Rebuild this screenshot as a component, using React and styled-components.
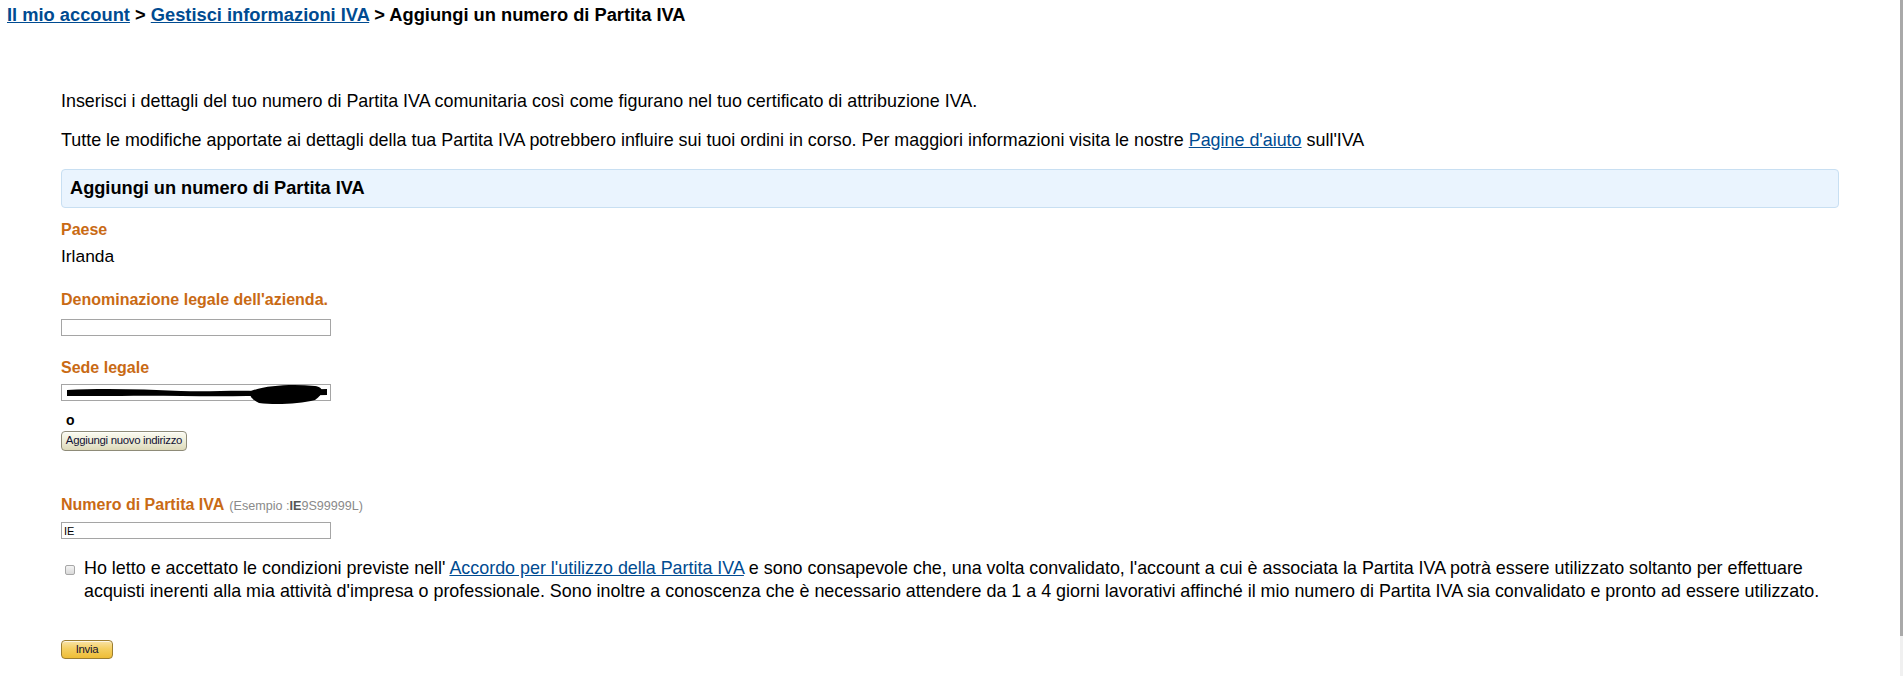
import React from 'react'
import styled, { createGlobalStyle } from 'styled-components'

const GlobalStyle = createGlobalStyle`
  html, body {
    margin: 0;
    padding: 0;
    background: #ffffff;
  }

  body {
    font-family: 'Liberation Sans', Arial, sans-serif;
    color: #000000;
  }
`

const Page = styled.div`
  display: flex;
  min-height: 676px;
`

const Main = styled.div`
  flex: 1;
`

const ScrollEdge = styled.div`
  width: 3px;
  height: 676px;
  background: linear-gradient(to bottom, #a9a9a9 0, #a9a9a9 636px, #f0f0f0 636px);
`

const Breadcrumb = styled.div`
  margin: 4px 0 0 7px;
  font-size: 18.3px;
  font-weight: bold;
  line-height: 21px;
`

const Link = styled.a`
  color: #004b91;
  text-decoration: underline;
`

const Content = styled.div`
  padding: 0 61px;
`

const Intro = styled.p`
  margin: ${(p) => p.$top || 0}px 0 0;
  font-size: 17.9px;
  line-height: 20px;
`

const SectionHeader = styled.div`
  margin-top: 19px;
  height: 37px;
  display: flex;
  align-items: center;
  padding-left: 8px;
  background: #eaf4fe;
  border: 1px solid #c8dff2;
  border-radius: 4px;
  font-size: 18.2px;
  font-weight: bold;
`

const Label = styled.div`
  margin-top: ${(p) => p.$top}px;
  color: #c96a14;
  font-size: 16px;
  font-weight: bold;
  line-height: 19px;
`

const Hint = styled.span`
  margin-left: 5px;
  color: #8a8a8a;
  font-size: 12.6px;
  font-weight: normal;

  & b {
    color: #555555;
  }
`

const Value = styled.div`
  margin-top: 7px;
  font-size: 17.4px;
  line-height: 20px;
`

const FieldBox = styled.div`
  position: relative;
  margin-top: ${(p) => p.$top}px;
  width: 270px;
  height: 17px;
`

const TextInput = styled.input`
  box-sizing: border-box;
  display: block;
  width: 100%;
  height: 100%;
  margin: 0;
  padding: 0 2px;
  border: 1px solid #a5a5a5;
  background: #ffffff;
  font-family: 'Liberation Sans', Arial, sans-serif;
  font-size: 11px;
  color: #000000;
  outline: none;
`

// scribbled-out address over the second field
const Redaction = styled.svg`
  position: absolute;
  left: 0;
  top: -1px;
  pointer-events: none;
`

const OrText = styled.div`
  margin: 10px 0 0 5px;
  font-size: 14px;
  font-weight: bold;
  line-height: 18px;
`

const SmallButton = styled.button`
  display: block;
  margin-top: ${(p) => p.$top || 0}px;
  box-sizing: border-box;
  height: ${(p) => p.$height}px;
  width: ${(p) => p.$width}px;
  padding: 0;
  border: 1px solid ${(p) => (p.$primary ? '#9c7e31' : '#8e8b78')};
  border-radius: 4px;
  background: ${(p) =>
    p.$primary
      ? 'linear-gradient(to bottom, #f8e3a8 0%, #f4cf62 45%, #eebd36 100%)'
      : 'linear-gradient(to bottom, #fbfbf1 0%, #ecebd6 55%, #ddd9b9 100%)'};
  box-shadow: inset 0 1px 0 rgba(255, 255, 255, 0.7);
  font-family: 'Liberation Sans', Arial, sans-serif;
  font-size: 11.4px;
  letter-spacing: -0.3px;
  color: #111133;
  line-height: 1;
  cursor: pointer;
`

const AgreementRow = styled.label`
  display: flex;
  align-items: flex-start;
  margin-top: 18px;
  padding-left: 4px;
  gap: 9px;
`

const CheckBox = styled.input.attrs({ type: 'checkbox' })`
  appearance: none;
  flex: none;
  box-sizing: border-box;
  width: 10px;
  height: 10px;
  margin: 8px 0 0;
  border: 1px solid #a7a7a7;
  border-radius: 2px;
  background: linear-gradient(to bottom, #f4f4f4, #d9d9d9);
`

const AgreementText = styled.div`
  font-size: 17.9px;
  line-height: 23px;
`

export default function App() {
  return (
    <Page>
      <GlobalStyle />
      <Main>
        <Breadcrumb>
          <Link href="#">Il mio account</Link> &gt; <Link href="#">Gestisci informazioni IVA</Link> &gt;
          Aggiungi un numero di Partita IVA
        </Breadcrumb>

        <Content>
          <Intro $top={66}>
            Inserisci i dettagli del tuo numero di Partita IVA comunitaria così come figurano nel tuo
            certificato di attribuzione IVA.
          </Intro>
          <Intro $top={19}>
            Tutte le modifiche apportate ai dettagli della tua Partita IVA potrebbero influire sui tuoi
            ordini in corso. Per maggiori informazioni visita le nostre <Link href="#">Pagine d'aiuto</Link>{' '}
            sull'IVA
          </Intro>

          <SectionHeader>Aggiungi un numero di Partita IVA</SectionHeader>

          <Label $top={12}>Paese</Label>
          <Value>Irlanda</Value>

          <Label $top={24}>Denominazione legale dell'azienda.</Label>
          <FieldBox $top={10}>
            <TextInput type="text" defaultValue="" />
          </FieldBox>

          <Label $top={22}>Sede legale</Label>
          <FieldBox $top={7}>
            <TextInput type="text" defaultValue="" />
            <Redaction width="272" height="22" viewBox="0 0 272 22">
              <path
                d="M6 7 C40 5 80 6 120 8 C150 9 170 7 196 8 L266 6 L266 12 C236 13 206 12 186 13 C140 14 100 12 60 13 L6 13 Z"
                fill="#000000"
              />
              <path
                d="M190 8 C206 2 232 1 254 3 C264 4 262 12 254 17 C238 21 214 22 198 20 C190 16 187 11 190 8 Z"
                fill="#000000"
              />
            </Redaction>
          </FieldBox>
          <OrText>o</OrText>
          <SmallButton $top={2} $width={126} $height={20}>
            Aggiungi nuovo indirizzo
          </SmallButton>

          <Label $top={44}>
            Numero di Partita IVA
            <Hint>
              (Esempio :<b>IE</b>9S99999L)
            </Hint>
          </Label>
          <FieldBox $top={6}>
            <TextInput type="text" defaultValue="IE" />
          </FieldBox>

          <AgreementRow>
            <CheckBox />
            <AgreementText>
              Ho letto e accettato le condizioni previste nell'{' '}
              <Link href="#">Accordo per l'utilizzo della Partita IVA</Link> e sono consapevole che, una
              volta convalidato, l'account a cui è associata la Partita IVA potrà essere utilizzato
              soltanto per effettuare acquisti inerenti alla mia attività d'impresa o professionale. Sono
              inoltre a conoscenza che è necessario attendere da 1 a 4 giorni lavorativi affinché il mio
              numero di Partita IVA sia convalidato e pronto ad essere utilizzato.
            </AgreementText>
          </AgreementRow>

          <SmallButton $top={37} $width={52} $height={19} $primary>
            Invia
          </SmallButton>
        </Content>
      </Main>
      <ScrollEdge />
    </Page>
  )
}
